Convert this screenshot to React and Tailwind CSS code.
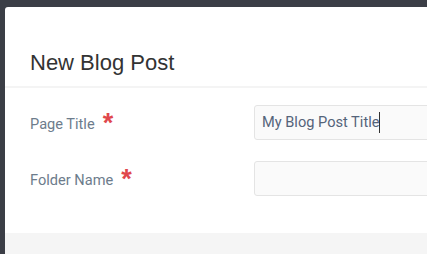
export default function App() {
  const rows = [
    { label: "Page Title", value: "My Blog Post Title", caret: true },
    { label: "Folder Name", value: "", caret: false },
  ];
  return (
    <div className="h-[254px] w-full overflow-hidden bg-[#3b3e46] pl-[5px] pt-[7px]">
      <div className="w-[600px] bg-white rounded-tl-[3px]">
        <div className="pt-[44px] pb-[11px] px-[25px] border-b-2 border-[#f4f4f4]">
          <h1 className="text-[22px] leading-[24px] text-[#333333] font-['Liberation_Sans',Arial,sans-serif]">
            New Blog Post
          </h1>
        </div>
        <div className="pt-[17px] pb-[37px] px-[25px] flex flex-col gap-[21px]">
          {rows.map((r) => (
            <div key={r.label} className="flex items-center">
              <div className="w-[224px] flex items-start font-['Roboto',sans-serif]">
                <span className="text-[14.6px] leading-[20px] text-[#6d7c8c] mt-[3px]">{r.label}</span>
                <span className="ml-[8px] text-[27px] leading-[24px] font-bold text-[#e0474c] font-['Liberation_Sans',Arial,sans-serif]">
                  *
                </span>
              </div>
              <div className="w-[320px] h-[35px] border border-[#e4e4e4] bg-[#fafafa] rounded-[3px] pl-[7px] pr-[7px] flex items-center font-['Roboto',sans-serif] text-[14.6px] text-[#55647a]">
                <span>{r.value}</span>
                {r.caret && <span className="inline-block w-px h-[21px] bg-[#333]" />}
              </div>
            </div>
          ))}
        </div>
        <div className="h-[40px] bg-[#f5f5f5]" />
      </div>
    </div>
  );
}
